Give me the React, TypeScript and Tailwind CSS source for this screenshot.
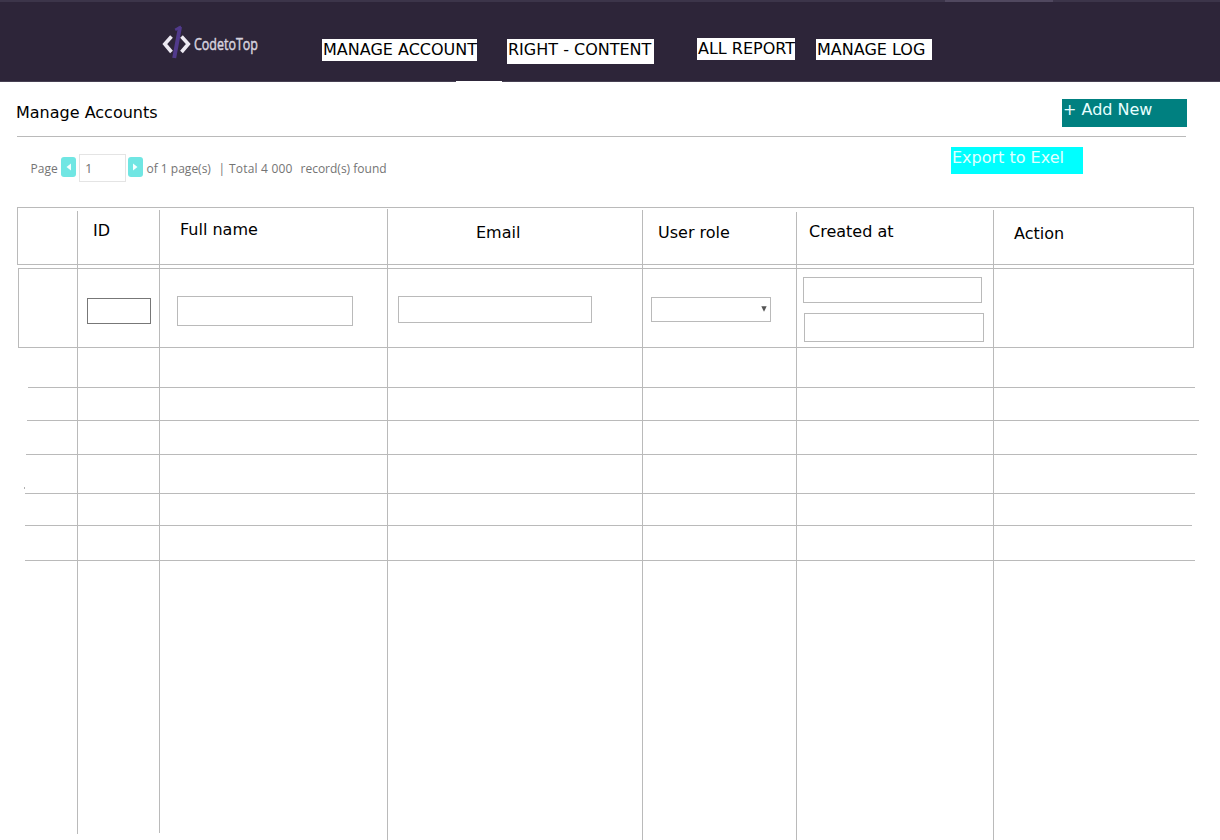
import type { ReactNode } from "react";

const navItems = [
  { label: "MANAGE ACCOUNT", box: "mt-[39px] h-[22px] w-[155px] pt-px pl-px" },
  { label: "RIGHT - CONTENT", box: "ml-[30px] mt-[39px] h-[25px] w-[147px] pt-px pl-px" },
  { label: "ALL REPORT", box: "ml-[43px] mt-[38px] h-[22px] w-[98px] pt-px pl-px" },
  { label: "MANAGE LOG", box: "ml-[21px] mt-[39px] h-[21px] w-[116px] pt-px pl-px" },
];

const rowLines = [
  "mt-[39px] ml-[11px] w-[1167px]",
  "mt-[32px] ml-[10px] w-[1172px]",
  "mt-[33px] ml-[9px] w-[1171px]",
  "mt-[38px] ml-[8px] w-[1170px]",
  "mt-[31px] ml-[8px] w-[1167px]",
  "mt-[34px] ml-[8px] w-[1170px]",
];

function Logo() {
  return (
    <div className="ml-[162px] mt-[23px] flex h-10 w-[160px] shrink-0">
      <svg width="140" height="40" viewBox="0 0 140 40">
        <g fill="none" strokeWidth="3.6">
          <path d="M9.5 13.5 L2.8 21 L9.5 29" stroke="#ece9f2" />
          <path d="M19.5 13.5 L26.3 21 L19.5 29" stroke="#ece9f2" />
          <path d="M12.2 35 L18 4" stroke="#513a8c" strokeWidth="4" />
          <path d="M13.2 6.8 L19 3.7" stroke="#513a8c" strokeWidth="2.6" />
        </g>
        <text
          x="32"
          y="26.5"
          textLength="64"
          lengthAdjust="spacingAndGlyphs"
          fill="#d6d2de"
          stroke="#d6d2de"
          strokeWidth="0.5"
          fontSize="16"
          fontFamily="'Open Sans', sans-serif"
        >
          CodetoTop
        </text>
      </svg>
    </div>
  );
}

function PagerButton({ d }: { d: string }) {
  return (
    <button className="mt-[3px] flex h-5 w-[15px] items-center justify-center rounded-[3px] bg-[#70e6e3]">
      <svg width="15" height="20" viewBox="0 0 15 20">
        <path d={d} fill="#f4ffff" />
      </svg>
    </button>
  );
}

function Column({ className, children }: { className: string; children?: ReactNode }) {
  return (
    <div className={`flex shrink-0 flex-col items-start border-l border-[#bababa] whitespace-nowrap ${className}`}>
      {children}
    </div>
  );
}

export default function App() {
  return (
    <div className="flex h-[840px] w-[1220px] flex-col overflow-hidden bg-white font-['DejaVu_Sans',sans-serif] text-base leading-[19px] text-black">
      <header className="grid h-[82px] shrink-0 border-b border-[#474153] bg-[#2d2539]">
        <div className="col-start-1 row-start-1 flex h-0.5 bg-[#3c354a]">
          <div className="ml-[945px] h-0.5 w-[108px] bg-[#50485f]" />
        </div>
        <div className="col-start-1 row-start-1 flex items-start">
          <Logo />
          <nav className="flex items-start">
            {navItems.map((item) => (
              <a key={item.label} className={`block shrink-0 bg-white whitespace-nowrap ${item.box}`}>
                {item.label}
              </a>
            ))}
          </nav>
        </div>
        <div className="col-start-1 row-start-1 mb-[-1px] ml-[456px] h-px w-[46px] self-end bg-white" />
      </header>

      <div className="ml-[17px] flex h-[55px] w-[1169px] shrink-0 items-start justify-between border-b border-[#bababa]">
        <h1 className="-ml-px mt-[21px]">Manage Accounts</h1>
        <button className="-mr-px mt-[17px] flex h-7 w-[125px] items-start bg-[#008080] pt-px pl-px text-[#e8ffff]">
          + Add New
        </button>
      </div>

      <div className="flex h-[70px] shrink-0 items-start">
        <div className="ml-[30.5px] mt-[17px] flex w-[920.5px] items-start font-['Open_Sans',sans-serif] text-[12px] leading-[30px] whitespace-pre text-[#747474]">
          <span className="w-[30.5px]">Page</span>
          <PagerButton d="M10 6.5 V13.5 L5.5 10 Z" />
          <div className="ml-[3px] h-7 w-[47px] border border-[#e4e4e4] pl-[5px] text-[13px] leading-[27px]">1</div>
          <div className="ml-[2px] flex">
            <PagerButton d="M5 6.5 V13.5 L9.5 10 Z" />
          </div>
          <span className="ml-[3.5px] w-[72px]">of 1 page(s)</span>
          <span className="w-[10.5px]">|</span>
          <span className="w-[71.5px] tracking-[0.2px]">Total 4 000</span>
          <span>record(s) found</span>
        </div>
        <button className="mt-[10px] flex h-[27px] w-[132px] items-start bg-[#00ffff] pt-px pl-px text-[#e0ffff]">
          Export to Exel
        </button>
      </div>

      <main className="ml-[17px] grid h-[633px] w-[1203px] shrink-0">
        <div className="col-start-1 row-start-1 flex flex-col">
          <div className="h-[58px] w-[1177px] shrink-0 border border-[#bababa]" />
          <div className="mt-[3px] ml-px h-[80px] w-[1176px] shrink-0 border border-[#bababa]" />
          {rowLines.map((line) => (
            <div key={line} className={`h-px shrink-0 bg-[#bababa] ${line}`} />
          ))}
        </div>
        <div className="col-start-1 row-start-1 flex items-start pl-[60px]">
          <Column className="mt-[4px] h-[623px] w-[82px]">
            <span className="mt-[10px] ml-[15px]">ID</span>
            <input className="mt-[58px] ml-[9px] h-[26px] w-[64px] border border-[#777]" />
          </Column>
          <Column className="mt-[3px] h-[623px] w-[228px]">
            <span className="mt-[10px] ml-[20px]">Full name</span>
            <input className="mt-[57px] ml-[17px] h-[30px] w-[176px] border border-[#bababa]" />
          </Column>
          <Column className="mt-[2px] h-[631px] w-[255px]">
            <span className="mt-[14px] ml-[88px]">Email</span>
            <input className="mt-[54px] ml-[10px] h-[27px] w-[194px] border border-[#bababa]" />
          </Column>
          <Column className="mt-[3px] h-[630px] w-[154px]">
            <span className="mt-[13px] ml-[15px]">User role</span>
            <div className="mt-[55px] ml-[8px] flex h-[25px] w-[120px] items-start justify-end border border-[#bababa] pt-[8px] pr-[3px]">
              <svg width="6" height="6" viewBox="0 0 6 6">
                <path d="M0.3 0.3 H5.7 L3 5.8 Z" fill="#555" />
              </svg>
            </div>
          </Column>
          <Column className="mt-[5px] h-[628px] w-[197px]">
            <span className="mt-[10px] ml-[12px]">Created at</span>
            <input className="mt-[36px] ml-[6px] h-[26px] w-[179px] border border-[#bababa]" />
            <input className="mt-[10px] ml-[7px] h-[29px] w-[180px] border border-[#bababa]" />
          </Column>
          <Column className="mt-[3px] h-[630px] w-[200px]">
            <span className="mt-[14px] ml-[20px]">Action</span>
          </Column>
        </div>
        <div className="col-start-1 row-start-1 mt-[280px] ml-[7px] h-[2px] w-px bg-[#b0b0b0]" />
      </main>
    </div>
  );
}
